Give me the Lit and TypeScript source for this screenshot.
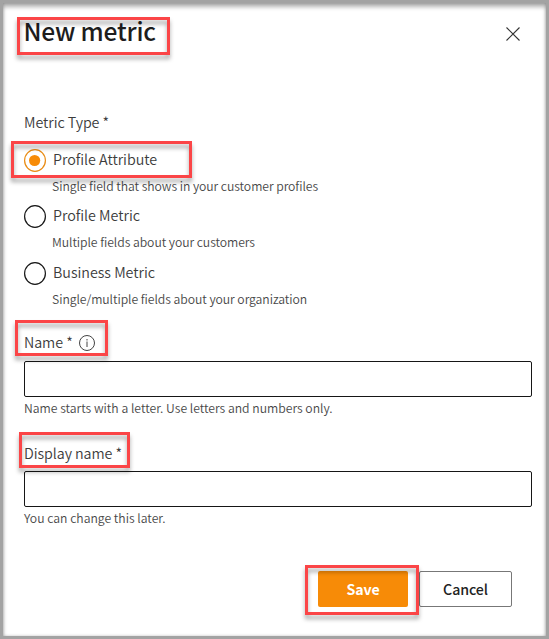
import { LitElement, html, css, svg, nothing } from "lit";
import { customElement, property } from "lit/decorators.js";

@customElement("metric-option")
class MetricOption extends LitElement {
  @property() label = "";
  @property() hint = "";
  @property({ type: Boolean }) checked = false;

  static styles = css`
    :host { display: block; height: 56.4px; }
    .row { display: flex; height: 23px; }
    .radio { width: 22px; height: 23px; flex: none; }
    .ring { fill: #fff; stroke: #161616; stroke-width: 1.2; }
    .on { stroke: #e98b12; }
    .dot { fill: #f78b07; }
    .label { margin-left: 7px; font-size: 14.3px; letter-spacing: -0.02px; line-height: 20px; white-space: nowrap; }
    .hint { margin: 4px 0 0 28px; font-size: 12.2px; letter-spacing: -0.05px; line-height: 20px; white-space: nowrap; color: #484848; }
  `;

  render() {
    return html`
      <div class="row">
        <svg class="radio" viewBox="0 0 22 23">
          <ellipse class="ring ${this.checked ? "on" : ""}" cx="11" cy="11.5" rx="10.4" ry="10.8" />
          ${this.checked ? svg`<circle class="dot" cx="10.6" cy="11.5" r="5.6" />` : nothing}
        </svg>
        <span class="label">${this.label}</span>
      </div>
      <div class="hint">${this.hint}</div>
    `;
  }
}

@customElement("app-root")
class AppRoot extends LitElement {
  static styles = css`
    :host {
      display: block; position: relative; box-sizing: border-box; width: 549px; height: 639px;
      overflow: hidden; background: #fff; border: 3px solid #a3a3a3;
      padding: 9px 14px 0 21px;
      font-family: "Noto Sans CJK SC", "Noto Sans CJK JP", sans-serif;
      font-weight: 350;
      color: #3c3c3c;
      box-shadow: inset 0 4px 4px rgba(0, 0, 0, 0.3), inset 0 0 3px rgba(0, 0, 0, 0.25);
    }
    .head { display: flex; justify-content: space-between; height: 36px; }
    h1 { margin: 0 0 0 -0.5px; font-size: 24.6px; letter-spacing: -0.2px; line-height: 36px; font-weight: 500; color: #1d1d1d; white-space: nowrap; }
    .close { width: 14px; height: 14px; margin: 15px 12px 0 0; }
    .close path { stroke: #333; stroke-width: 1.1; fill: none; }
    .label { display: flex; height: 20px; font-size: 14.3px; letter-spacing: -0.06px; line-height: 20px; white-space: nowrap; }
    .type { margin-top: 64px; margin-bottom: 17px; }
    .name { margin-top: 13.8px; margin-bottom: 9px; }
    .display { margin-top: 25px; margin-bottom: 8px; }
    .info { width: 16px; height: 16px; margin: 3px 0 0 6px; }
    .info circle { fill: none; stroke: #444; stroke-width: 1; }
    .info path { stroke: #555; stroke-width: 1.1; fill: none; }
    input {
      display: block; box-sizing: border-box; width: 508px; height: 36px; padding: 0 8px;
      border: 1px solid #161616; border-radius: 2px; background: #fff; font: inherit; outline: none;
    }
    .help { margin-top: 1px; height: 20px; font-size: 12.2px; letter-spacing: 0; line-height: 20px; color: #484848; white-space: nowrap; }
    .actions { display: flex; justify-content: flex-end; gap: 11px; margin: 43px 20px 0 0; }
    button {
      box-sizing: border-box; height: 36px; padding: 0; border-radius: 2px;
      font-family: inherit; font-size: 14.2px; letter-spacing: -0.1px; line-height: 20px; font-weight: 500;
    }
    .save { width: 90px; border: 0; background: #f78b07; color: #fff; font-weight: 700; }
    .cancel { width: 93px; border: 1px solid #777; background: #fff; color: #222; }
    .mark {
      position: absolute; box-sizing: border-box; border: 3px solid #fb4547; pointer-events: none;
      filter: drop-shadow(0 4px 2px rgba(0, 0, 0, 0.35));
    }
    .m-title { left: 14px; top: 14px; width: 153px; height: 38px; }
    .m-option { left: 8px; top: 138px; width: 181px; height: 37px; }
    .m-name { left: 12px; top: 317px; width: 93px; height: 36px; }
    .m-display { left: 16px; top: 429px; width: 111px; height: 36px; }
    .m-save { left: 302px; top: 562px; width: 114px; height: 50px; }
  `;

  render() {
    return html`
      <div class="head">
        <h1>New metric</h1>
        <svg class="close" viewBox="0 0 14 14"><path d="M.5 .5 13.5 13.5M13.5 .5 .5 13.5" /></svg>
      </div>
      <div class="label type">Metric Type *</div>
      <metric-option checked label="Profile Attribute" hint="Single field that shows in your customer profiles"></metric-option>
      <metric-option label="Profile Metric" hint="Multiple fields about your customers"></metric-option>
      <metric-option label="Business Metric" hint="Single/multiple fields about your organization"></metric-option>
      <div class="label name">
        <span>Name *</span>
        <svg class="info" viewBox="0 0 16 16">
          <circle cx="8" cy="8" r="7.5" /><path d="M8 4v1.4M8 6.6V12" />
        </svg>
      </div>
      <input aria-label="Name" />
      <div class="help">Name starts with a letter. Use letters and numbers only.</div>
      <div class="label display">Display name *</div>
      <input aria-label="Display name" />
      <div class="help">You can change this later.</div>
      <div class="actions">
        <button class="save">Save</button>
        <button class="cancel">Cancel</button>
      </div>
      <div class="mark m-title"></div>
      <div class="mark m-option"></div>
      <div class="mark m-name"></div>
      <div class="mark m-display"></div>
      <div class="mark m-save"></div>
    `;
  }
}
